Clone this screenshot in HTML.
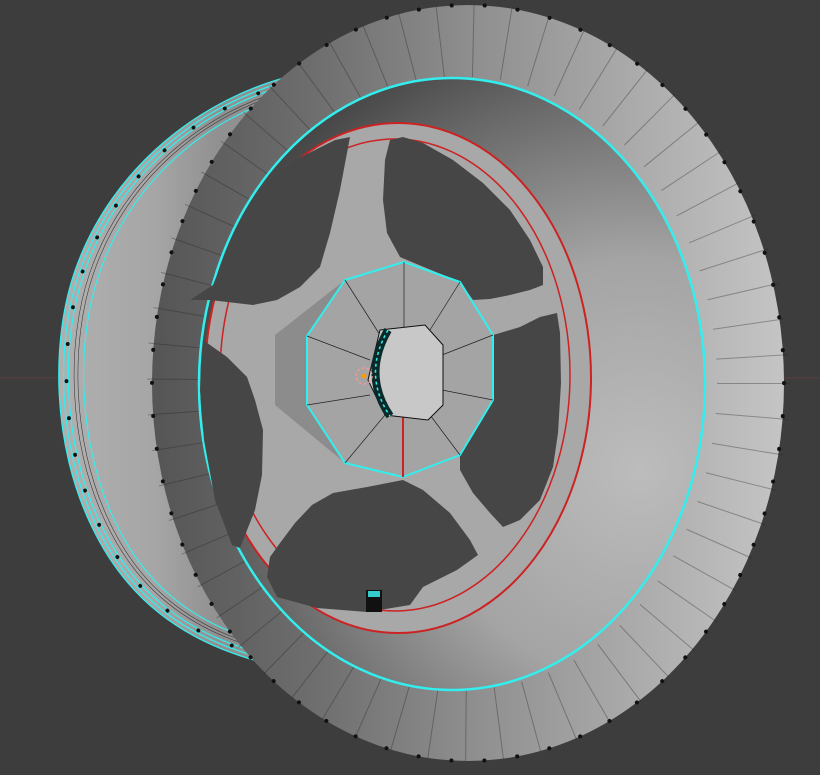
<!DOCTYPE html>
<html><head><meta charset="utf-8"><style>html,body{margin:0;padding:0;background:#3d3d3d;overflow:hidden}svg{display:block}</style></head>
<body>
<svg width="820" height="775" viewBox="0 0 820 775" xmlns="http://www.w3.org/2000/svg">
<defs>
<linearGradient id="front" x1="160" y1="0" x2="780" y2="0" gradientUnits="userSpaceOnUse">
<stop offset="0" stop-color="#565656"/><stop offset="0.25" stop-color="#6e6e6e"/><stop offset="0.5" stop-color="#8e8e8e"/><stop offset="1" stop-color="#c4c4c4"/></linearGradient>
<radialGradient id="barrel" cx="640" cy="470" r="470" gradientUnits="userSpaceOnUse">
<stop offset="0" stop-color="#bcbcbc"/><stop offset="0.45" stop-color="#a4a4a4"/><stop offset="0.8" stop-color="#6a6a6a"/><stop offset="1" stop-color="#474747"/></radialGradient>
<linearGradient id="back" x1="55" y1="0" x2="220" y2="0" gradientUnits="userSpaceOnUse">
<stop offset="0" stop-color="#b0b0b0"/><stop offset="0.6" stop-color="#a6a6a6"/><stop offset="1" stop-color="#909090"/></linearGradient>
<path id="bk" d="M295,75 C200,98 112,168 76,268 C50,340 52,445 92,527 C126,598 182,642 265,663"/>
</defs>
<rect width="820" height="775" fill="#3d3d3d"/>
<line x1="0" y1="378" x2="820" y2="378" stroke="#5a4040" stroke-width="1"/>
<!-- back rim -->
<path d="M295,75 C200,98 112,168 76,268 C50,340 52,445 92,527 C126,598 182,642 265,663 L400,400 Z" fill="url(#back)"/>
<g fill="none" stroke="#3ee" stroke-width="1.3">
<use href="#bk"/>
<use href="#bk" transform="translate(250 370) scale(0.975 0.985) translate(-250 -370)"/>
<use href="#bk" transform="translate(250 370) scale(0.95 0.97) translate(-250 -370)"/>
<use href="#bk" transform="translate(250 370) scale(0.87 0.93) translate(-250 -370)"/>
</g>
<g fill="none" stroke="#333" stroke-width="0.6">
<use href="#bk" transform="translate(250 370) scale(0.92 0.955) translate(-250 -370)"/>
<use href="#bk" transform="translate(250 370) scale(0.9 0.945) translate(-250 -370)"/>
</g>
<use href="#bk" fill="none" stroke="#111" stroke-width="4" stroke-dasharray="0.1 38" stroke-linecap="round" transform="translate(250 370) scale(0.96 0.975) translate(-250 -370)"/>
<!-- front outer -->
<ellipse cx="468" cy="383" rx="316" ry="378" fill="url(#front)"/>
<ellipse cx="468" cy="383" rx="316" ry="378" fill="none" stroke="#111" stroke-width="4" stroke-dasharray="0.1 33" stroke-linecap="round"/>
<ellipse cx="468" cy="383" rx="285" ry="342" fill="none" stroke="#222" stroke-width="72" stroke-opacity="0.35" stroke-dasharray="1 32"/>
<!-- inner barrel -->
<ellipse cx="452" cy="384" rx="253" ry="306" fill="url(#barrel)"/>
<ellipse cx="452" cy="384" rx="253" ry="306" fill="none" stroke="#3ee" stroke-width="2.5"/>
<!-- spoke disc -->
<ellipse cx="398" cy="378" rx="193" ry="255" fill="#a8a8a8"/>
<ellipse cx="398" cy="378" rx="193" ry="255" fill="none" stroke="#c22" stroke-width="2"/>
<ellipse cx="395" cy="375" rx="175" ry="236" fill="none" stroke="#c22" stroke-width="1.5"/>
<!-- dark windows -->
<g fill="#464646">
<polygon points="403,137 423,143 453,160 483,183 510,210 530,240 543,267 543,285 530,290 510,295 490,299 473,300 460,282 407,260 400,257 387,233 383,200 385,160 390,140"/>
<polygon points="500,333 520,327 540,317 557,313 560,333 561,383 558,433 553,467 540,500 520,520 503,527 490,513 473,493 460,470 460,455 493,400 493,335"/>
<polygon points="267,577 270,557 280,543 295,523 312,505 333,493 367,487 403,480 423,490 450,513 470,540 478,555 457,570 423,587 410,605 367,612 317,608 277,597"/>
<polygon points="203,340 227,357 247,377 255,400 263,430 262,475 255,510 240,548 232,545 215,500 204,440 200,390"/>
<polygon points="210,300 253,305 277,300 300,287 320,267 330,233 340,190 350,137 335,140 295,160 258,190 233,235 213,285 190,300"/>
</g>
<!-- hub -->
<polygon points="404,262 345,280 275,335 275,405 345,463 403,477 460,455 493,400 493,335 460,282" fill="#8c8c8c"/>
<polygon points="404,262 345,280 307,336 307,405 345,463 403,477 460,455 493,400 493,335 460,282" fill="#a4a4a4" stroke="#3ee" stroke-width="2"/>
<g stroke="#222" stroke-width="0.7">
<line x1="404" y1="262" x2="404" y2="330"/><line x1="345" y1="280" x2="380" y2="335"/><line x1="307" y1="336" x2="370" y2="360"/><line x1="307" y1="405" x2="370" y2="395"/><line x1="345" y1="463" x2="385" y2="415"/><line x1="460" y1="455" x2="430" y2="415"/><line x1="493" y1="400" x2="442" y2="390"/><line x1="493" y1="335" x2="442" y2="355"/><line x1="460" y1="282" x2="430" y2="330"/>
</g>
<line x1="403" y1="412" x2="403" y2="477" stroke="#c22" stroke-width="2"/>
<polygon points="380,330 425,325 443,345 443,405 428,420 385,415 368,380" fill="#c8c8c8" stroke="#111" stroke-width="1"/>
<path d="M388,330 Q362,375 390,416" fill="none" stroke="#0a2a2a" stroke-width="8"/>
<path d="M388,330 Q362,375 390,416" fill="none" stroke="#3ee" stroke-width="1.5" stroke-dasharray="3 3"/>
<circle cx="364" cy="376" r="8" fill="none" stroke="#e99" stroke-width="1.5" stroke-dasharray="3 2"/>
<circle cx="364" cy="376" r="2.5" fill="#f90"/>
<!-- valve -->
<rect x="366" y="590" width="16" height="22" fill="#111"/>
<rect x="368" y="591" width="12" height="6" fill="#3cc"/>
</svg>
</body></html>
